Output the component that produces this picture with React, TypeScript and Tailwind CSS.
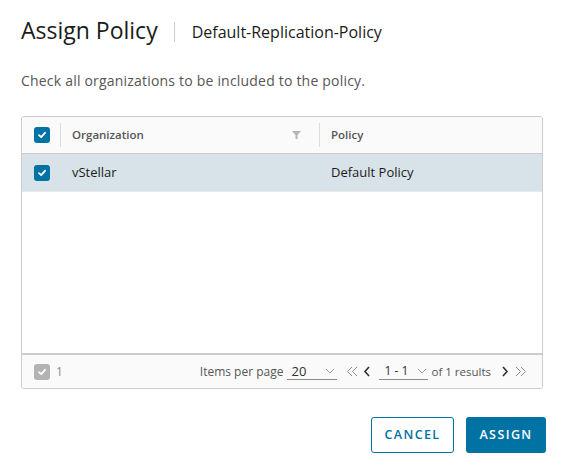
import React from "react";

const font = { fontFamily: '"Open Sans", "Liberation Sans", sans-serif' };

function Check({ disabled }: { disabled?: boolean }) {
  return (
    <div
      className={`w-4 h-4 rounded-[3px] flex items-center justify-center ${
        disabled ? "bg-[#b3b3b3]" : "bg-[#0072a3]"
      }`}
    >
      <svg width="10" height="10" viewBox="0 0 10 10">
        <path d="M2 5.2 L4.2 7.2 L8 2.8" stroke="white" strokeWidth="1.8" fill="none" strokeLinecap="round" strokeLinejoin="round" />
      </svg>
    </div>
  );
}

function Chevron() {
  return (
    <svg width="10" height="6" viewBox="0 0 10 6">
      <path d="M1 1 L5 5 L9 1" stroke="#9a9a9a" strokeWidth="1" fill="none" />
    </svg>
  );
}

function Double({ dir, className }: { dir: "l" | "r"; className?: string }) {
  const d = dir === "l" ? "M6 1 L1.5 5.5 L6 10 M11 1 L6.5 5.5 L11 10" : "M1 1 L5.5 5.5 L1 10 M6 1 L10.5 5.5 L6 10";
  return (
    <svg className={className} width="12" height="11" viewBox="0 0 12 11">
      <path d={d} stroke="#8c8c8c" strokeWidth="1" fill="none" />
    </svg>
  );
}

export default function App() {
  return (
    <div className="w-[565px] h-[470px] bg-white text-[#313131]" style={font}>
      <div className="pl-[21px] pt-[14px] flex items-center">
        <span className="text-[23px] text-[#1b1b1b] leading-[32px]">Assign Policy</span>
        <span className="ml-[16px] mr-[17px] w-px h-[20px] bg-[#cccccc] mt-[3px]" />
        <span className="text-[16px] text-[#1b1b1b] mt-[3px]">Default-Replication-Policy</span>
      </div>
      <div className="pl-[21px] mt-[24px] text-[14px] tracking-[0.2px] text-[#565656]">
        Check all organizations to be included to the policy.
      </div>
      <div className="ml-[21px] mt-[25px] w-[522px] h-[273px] border border-[#cccccc] rounded-[3px] flex flex-col overflow-hidden">
        <div className="h-[37px] bg-[#fafafa] border-b border-[#cccccc] flex items-center text-[11.5px] font-semibold text-[#565656]">
          <div className="w-[38px] pl-[12px]"><Check /></div>
          <div className="w-px h-[24px] bg-[#dddddd]" />
          <div className="w-[258px] pl-[11px] flex items-center justify-between pr-[18px]">
            <span>Organization</span>
            <svg width="9" height="8" viewBox="0 0 9 8">
              <path d="M0 0 H9 L5.5 4 V8 H3.5 V4 Z" fill="#b5b5b5" />
            </svg>
          </div>
          <div className="w-px h-[24px] bg-[#dddddd]" />
          <div className="pl-[11px]">Policy</div>
        </div>
        <div className="h-[38px] bg-[#d8e3e9] border-b border-[#e8e8e8] flex items-center text-[13px] text-[#1b1b1b]">
          <div className="w-[39px] pl-[12px]"><Check /></div>
          <div className="w-[259px] pl-[11px]">vStellar</div>
          <div className="pl-[11px]">Default Policy</div>
        </div>
        <div className="flex-1" />
        <div className="h-[35px] border-t-2 border-[#cccccc] bg-[#fafafa] flex items-center text-[12px] text-[#565656]">
          <div className="pl-[12px] flex items-center gap-[6px]">
            <Check disabled />
            <span className="text-[12px] text-[#8c8c8c]">1</span>
          </div>
          <div className="flex-1" />
          <span>Items per page</span>
          <div className="ml-[4px] w-[50px] border-b border-[#8c8c8c] flex items-center justify-between pl-[4px] pr-[2px] text-[13px] text-[#313131] leading-[16px]">
            <span>20</span>
            <Chevron />
          </div>
          <Double dir="l" className="ml-[9px]" />
          <svg className="ml-[5px]" width="8" height="11" viewBox="0 0 8 11">
            <path d="M6 1 L2 5.5 L6 10" stroke="#313131" strokeWidth="1.6" fill="none" />
          </svg>
          <div className="ml-[8px] w-[49px] border-b border-[#8c8c8c] flex items-center justify-between pl-[5px] pr-[1px] text-[12px] text-[#313131] leading-[16px]">
            <span>1 - 1</span>
            <Chevron />
          </div>
          <span className="ml-[3px] text-[11.5px]">of 1 results</span>
          <svg className="ml-[10px]" width="8" height="11" viewBox="0 0 8 11">
            <path d="M2 1 L6 5.5 L2 10" stroke="#313131" strokeWidth="1.6" fill="none" />
          </svg>
          <Double dir="r" className="ml-[6px] mr-[15px]" />
        </div>
      </div>
      <div className="mt-[28px] pr-[19px] flex justify-end gap-[12px]">
        <button className="h-[36px] w-[83px] border border-[#0072a3] rounded-[3px] text-[#0072a3] text-[12.5px] font-semibold tracking-[1.4px] bg-white">
          CANCEL
        </button>
        <button className="h-[36px] w-[80px] rounded-[3px] bg-[#0072a3] text-white text-[12.5px] font-semibold tracking-[1.4px]">
          ASSIGN
        </button>
      </div>
    </div>
  );
}
